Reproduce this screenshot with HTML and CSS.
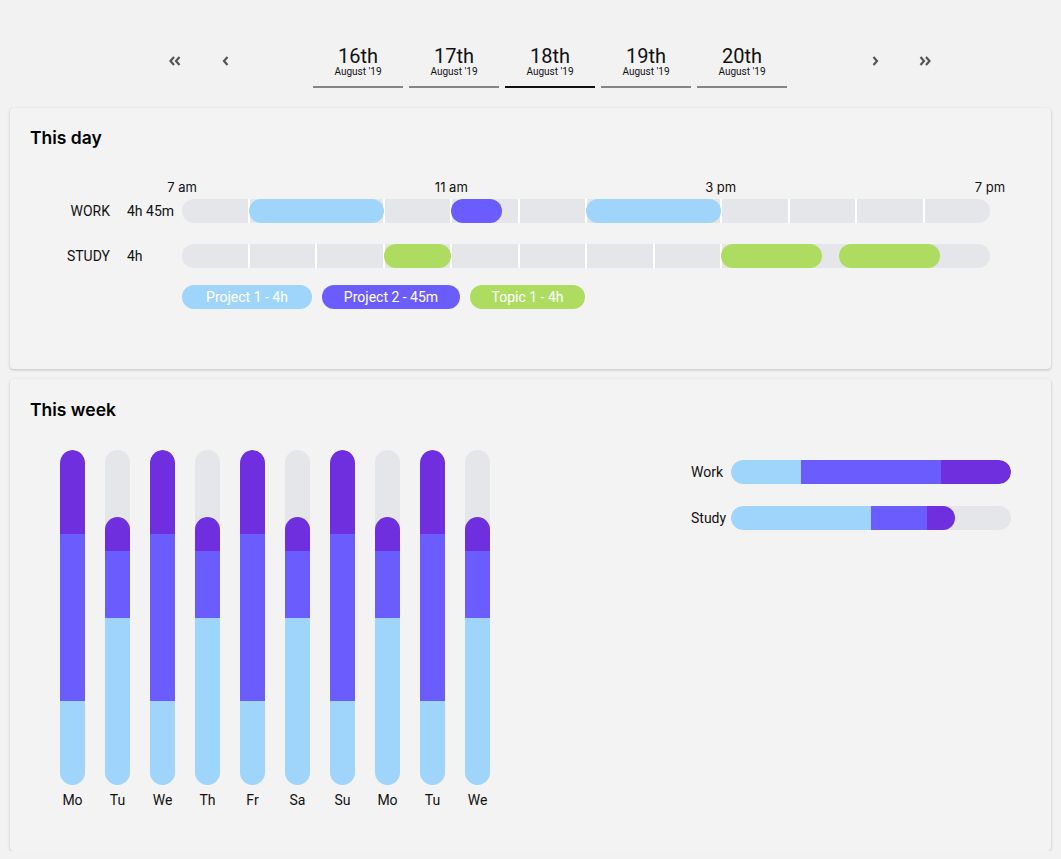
FILE: index.html
```html
<!DOCTYPE html>
<html lang="en">
<head>
<meta charset="utf-8">
<title>Time tracker</title>
<link rel="stylesheet" href="styles.css">
</head>
<body>
<nav class="datenav">
  <button class="arrow" aria-label="First">
    <svg width="12" height="10" viewBox="0 0 12 10"><path d="M5 1 L1.5 5 L5 9 M10.5 1 L7 5 L10.5 9" fill="none" stroke="#555" stroke-width="2.2"/></svg>
  </button>
  <button class="arrow" aria-label="Previous">
    <svg width="7" height="10" viewBox="0 0 7 10"><path d="M5.5 1 L2 5 L5.5 9" fill="none" stroke="#555" stroke-width="2.2"/></svg>
  </button>
  <div class="spacer"></div>
  <div class="tabs">
    <div class="tab"><span class="day">16th</span><span class="month">August '19</span></div>
    <div class="tab"><span class="day">17th</span><span class="month">August '19</span></div>
    <div class="tab active"><span class="day">18th</span><span class="month">August '19</span></div>
    <div class="tab"><span class="day">19th</span><span class="month">August '19</span></div>
    <div class="tab"><span class="day">20th</span><span class="month">August '19</span></div>
  </div>
  <div class="spacer"></div>
  <button class="arrow" aria-label="Next">
    <svg width="7" height="10" viewBox="0 0 7 10"><path d="M1.5 1 L5 5 L1.5 9" fill="none" stroke="#555" stroke-width="2.2"/></svg>
  </button>
  <button class="arrow" aria-label="Last">
    <svg width="12" height="10" viewBox="0 0 12 10"><path d="M1.5 1 L5 5 L1.5 9 M7 1 L10.5 5 L7 9" fill="none" stroke="#555" stroke-width="2.2"/></svg>
  </button>
</nav>

<section class="card card-day">
  <h2>This day</h2>
  <div class="axis">
    <span class="tick" style="left:0%">7 am</span>
    <span class="tick" style="left:33.333%">11 am</span>
    <span class="tick" style="left:66.667%">3 pm</span>
    <span class="tick" style="left:100%">7 pm</span>
  </div>
  <div class="row">
    <span class="lbl">WORK</span>
    <span class="dur">4h 45m</span>
    <div class="track">
      <div class="cells"><i></i><i></i><i></i><i></i><i></i><i></i><i></i><i></i><i></i><i></i><i></i><i></i></div>
      <span class="ev c-blue" style="left:8.333%;width:16.667%"></span>
      <span class="ev c-purple" style="left:33.333%;width:6.25%"></span>
      <span class="ev c-blue" style="left:50%;width:16.667%"></span>
    </div>
  </div>
  <div class="row row-study">
    <span class="lbl">STUDY</span>
    <span class="dur">4h</span>
    <div class="track">
      <div class="cells"><i></i><i></i><i></i><i></i><i></i><i></i><i></i><i></i><i></i><i></i><i></i><i></i></div>
      <span class="ev c-green" style="left:25%;width:8.333%"></span>
      <span class="ev c-green" style="left:66.667%;width:12.5%"></span>
      <span class="ev c-green" style="left:81.25%;width:12.5%"></span>
    </div>
  </div>
  <div class="legend">
    <span class="pill c-blue">Project 1 - 4h</span>
    <span class="pill c-purple">Project 2 - 45m</span>
    <span class="pill c-green">Topic 1 - 4h</span>
  </div>
</section>

<section class="card card-week">
  <h2>This week</h2>
  <div class="week">
    <div class="cols">
      <div class="col"><div class="vbar"><div class="vfill" style="height:100%"><i class="c-dark" style="height:25%"></i><i class="c-purple" style="height:50%"></i><i class="c-blue" style="height:25%"></i></div></div><span class="wd">Mo</span></div>
      <div class="col"><div class="vbar"><div class="vfill" style="height:80%"><i class="c-dark" style="height:12.5%"></i><i class="c-purple" style="height:25%"></i><i class="c-blue" style="height:62.5%"></i></div></div><span class="wd">Tu</span></div>
      <div class="col"><div class="vbar"><div class="vfill" style="height:100%"><i class="c-dark" style="height:25%"></i><i class="c-purple" style="height:50%"></i><i class="c-blue" style="height:25%"></i></div></div><span class="wd">We</span></div>
      <div class="col"><div class="vbar"><div class="vfill" style="height:80%"><i class="c-dark" style="height:12.5%"></i><i class="c-purple" style="height:25%"></i><i class="c-blue" style="height:62.5%"></i></div></div><span class="wd">Th</span></div>
      <div class="col"><div class="vbar"><div class="vfill" style="height:100%"><i class="c-dark" style="height:25%"></i><i class="c-purple" style="height:50%"></i><i class="c-blue" style="height:25%"></i></div></div><span class="wd">Fr</span></div>
      <div class="col"><div class="vbar"><div class="vfill" style="height:80%"><i class="c-dark" style="height:12.5%"></i><i class="c-purple" style="height:25%"></i><i class="c-blue" style="height:62.5%"></i></div></div><span class="wd">Sa</span></div>
      <div class="col"><div class="vbar"><div class="vfill" style="height:100%"><i class="c-dark" style="height:25%"></i><i class="c-purple" style="height:50%"></i><i class="c-blue" style="height:25%"></i></div></div><span class="wd">Su</span></div>
      <div class="col"><div class="vbar"><div class="vfill" style="height:80%"><i class="c-dark" style="height:12.5%"></i><i class="c-purple" style="height:25%"></i><i class="c-blue" style="height:62.5%"></i></div></div><span class="wd">Mo</span></div>
      <div class="col"><div class="vbar"><div class="vfill" style="height:100%"><i class="c-dark" style="height:25%"></i><i class="c-purple" style="height:50%"></i><i class="c-blue" style="height:25%"></i></div></div><span class="wd">Tu</span></div>
      <div class="col"><div class="vbar"><div class="vfill" style="height:80%"><i class="c-dark" style="height:12.5%"></i><i class="c-purple" style="height:25%"></i><i class="c-blue" style="height:62.5%"></i></div></div><span class="wd">We</span></div>
    </div>
    <div class="totals">
      <div class="trow">
        <span class="tlbl">Work</span>
        <div class="htrack"><div class="hfill" style="width:100%"><i class="c-blue" style="width:25%"></i><i class="c-purple" style="width:50%"></i><i class="c-dark" style="width:25%"></i></div></div>
      </div>
      <div class="trow">
        <span class="tlbl">Study</span>
        <div class="htrack"><div class="hfill" style="width:80%"><i class="c-blue" style="width:62.5%"></i><i class="c-purple" style="width:25%"></i><i class="c-dark" style="width:12.5%"></i></div></div>
      </div>
    </div>
  </div>
</section>
</body>
</html>
```

FILE: styles.css
```css
* { box-sizing: border-box; }

body {
  margin: 0;
  background: #f2f2f2;
  font-family: Roboto, "Liberation Sans", sans-serif;
  color: #111;
}

.c-blue { background: #a0d5fb; }
.c-purple { background: #6b5dfd; }
.c-dark { background: #6f2fdf; }
.c-green { background: #addc61; }

/* date navigation */
.datenav {
  display: flex;
  justify-content: center;
  align-items: flex-start;
  padding: 46px 0 0 39px;
  height: 108px;
}
.arrow {
  width: 50px;
  height: 20px;
  margin-top: 5px;
  border: 0;
  padding: 0;
  background: none;
  display: flex;
  align-items: center;
  justify-content: center;
  cursor: pointer;
}
.spacer { width: 63px; }
.tabs { display: flex; gap: 6px; }
.tab {
  width: 90px;
  display: flex;
  flex-direction: column;
  align-items: center;
  padding-bottom: 9px;
  border-bottom: 2px solid #858585;
}
.tab.active { border-bottom-color: #111; }
.day {
  font-size: 20px;
  line-height: 20px;
  color: #111;
}
.month {
  font-size: 10px;
  line-height: 11px;
  color: #111;
}

/* cards */
.card {
  margin: 0 10px;
  background: #f3f3f3;
  border-radius: 4px;
  box-shadow: 0 1px 3px rgba(0, 0, 0, 0.22);
  padding: 20px;
}
.card h2 {
  margin: 0;
  font-family: Inter, "Noto Sans", sans-serif;
  font-weight: 600;
  font-size: 17.5px;
  line-height: 20px;
  color: #000;
}
.card-day { height: 261px; }
.card-week { height: 472px; margin-top: 10px; padding-top: 21px; }

/* day timeline */
.axis {
  position: relative;
  margin: 32px 0 0 152px;
  width: 808px;
  height: 14px;
}
.tick {
  position: absolute;
  top: 0;
  transform: translateX(-50%);
  font-family: Inter, "Noto Sans", sans-serif;
  font-size: 13px;
  line-height: 14px;
  white-space: nowrap;
}
.row {
  display: flex;
  align-items: center;
  height: 24px;
  margin-top: 5px;
  font-size: 14px;
}
.row-study { margin-top: 21px; }
.lbl {
  width: 80px;
  margin-right: 17px;
  text-align: right;
}
.dur { width: 55px; }
.track {
  position: relative;
  width: 808px;
  height: 24px;
  border-radius: 12px;
  overflow: hidden;
  background: #e5e6ea;
}
.cells {
  display: flex;
  height: 100%;
}
.cells i {
  flex: 1;
  border-left: 2px solid #fff;
}
.cells i:first-child { border-left: 0; }
.ev {
  position: absolute;
  top: 0;
  height: 24px;
  border-radius: 12px;
}
.legend {
  display: flex;
  gap: 10px;
  margin: 17px 0 0 152px;
}
.pill {
  height: 24px;
  line-height: 24px;
  border-radius: 12px;
  color: #fff;
  font-size: 14px;
  text-align: center;
}
.legend .c-blue { width: 130px; }
.legend .c-purple { width: 138px; }
.legend .c-green { width: 115px; }

/* week */
.week {
  display: flex;
  justify-content: space-between;
  margin-top: 30px;
}
.cols {
  display: flex;
  margin-left: 20px;
}
.col {
  width: 45px;
  display: flex;
  flex-direction: column;
  align-items: center;
}
.vbar {
  width: 25px;
  height: 335px;
  border-radius: 12.5px;
  background: #e5e6ea;
  overflow: hidden;
  display: flex;
  flex-direction: column;
  justify-content: flex-end;
}
.vfill {
  display: flex;
  flex-direction: column;
  border-radius: 12.5px 12.5px 0 0;
  overflow: hidden;
}
.vfill i { display: block; }
.wd {
  margin-top: 7px;
  font-size: 14px;
  line-height: 16px;
}
.totals {
  margin: 10px 20px 0 0;
  display: flex;
  flex-direction: column;
  gap: 22px;
}
.trow {
  display: flex;
  align-items: center;
  height: 24px;
  font-size: 14px;
}
.tlbl { width: 40px; }
.htrack {
  width: 280px;
  height: 24px;
  border-radius: 12px;
  background: #e5e6ea;
  overflow: hidden;
}
.hfill {
  display: flex;
  height: 100%;
  border-radius: 12px;
  overflow: hidden;
}
.hfill i { display: block; height: 100%; }
```
